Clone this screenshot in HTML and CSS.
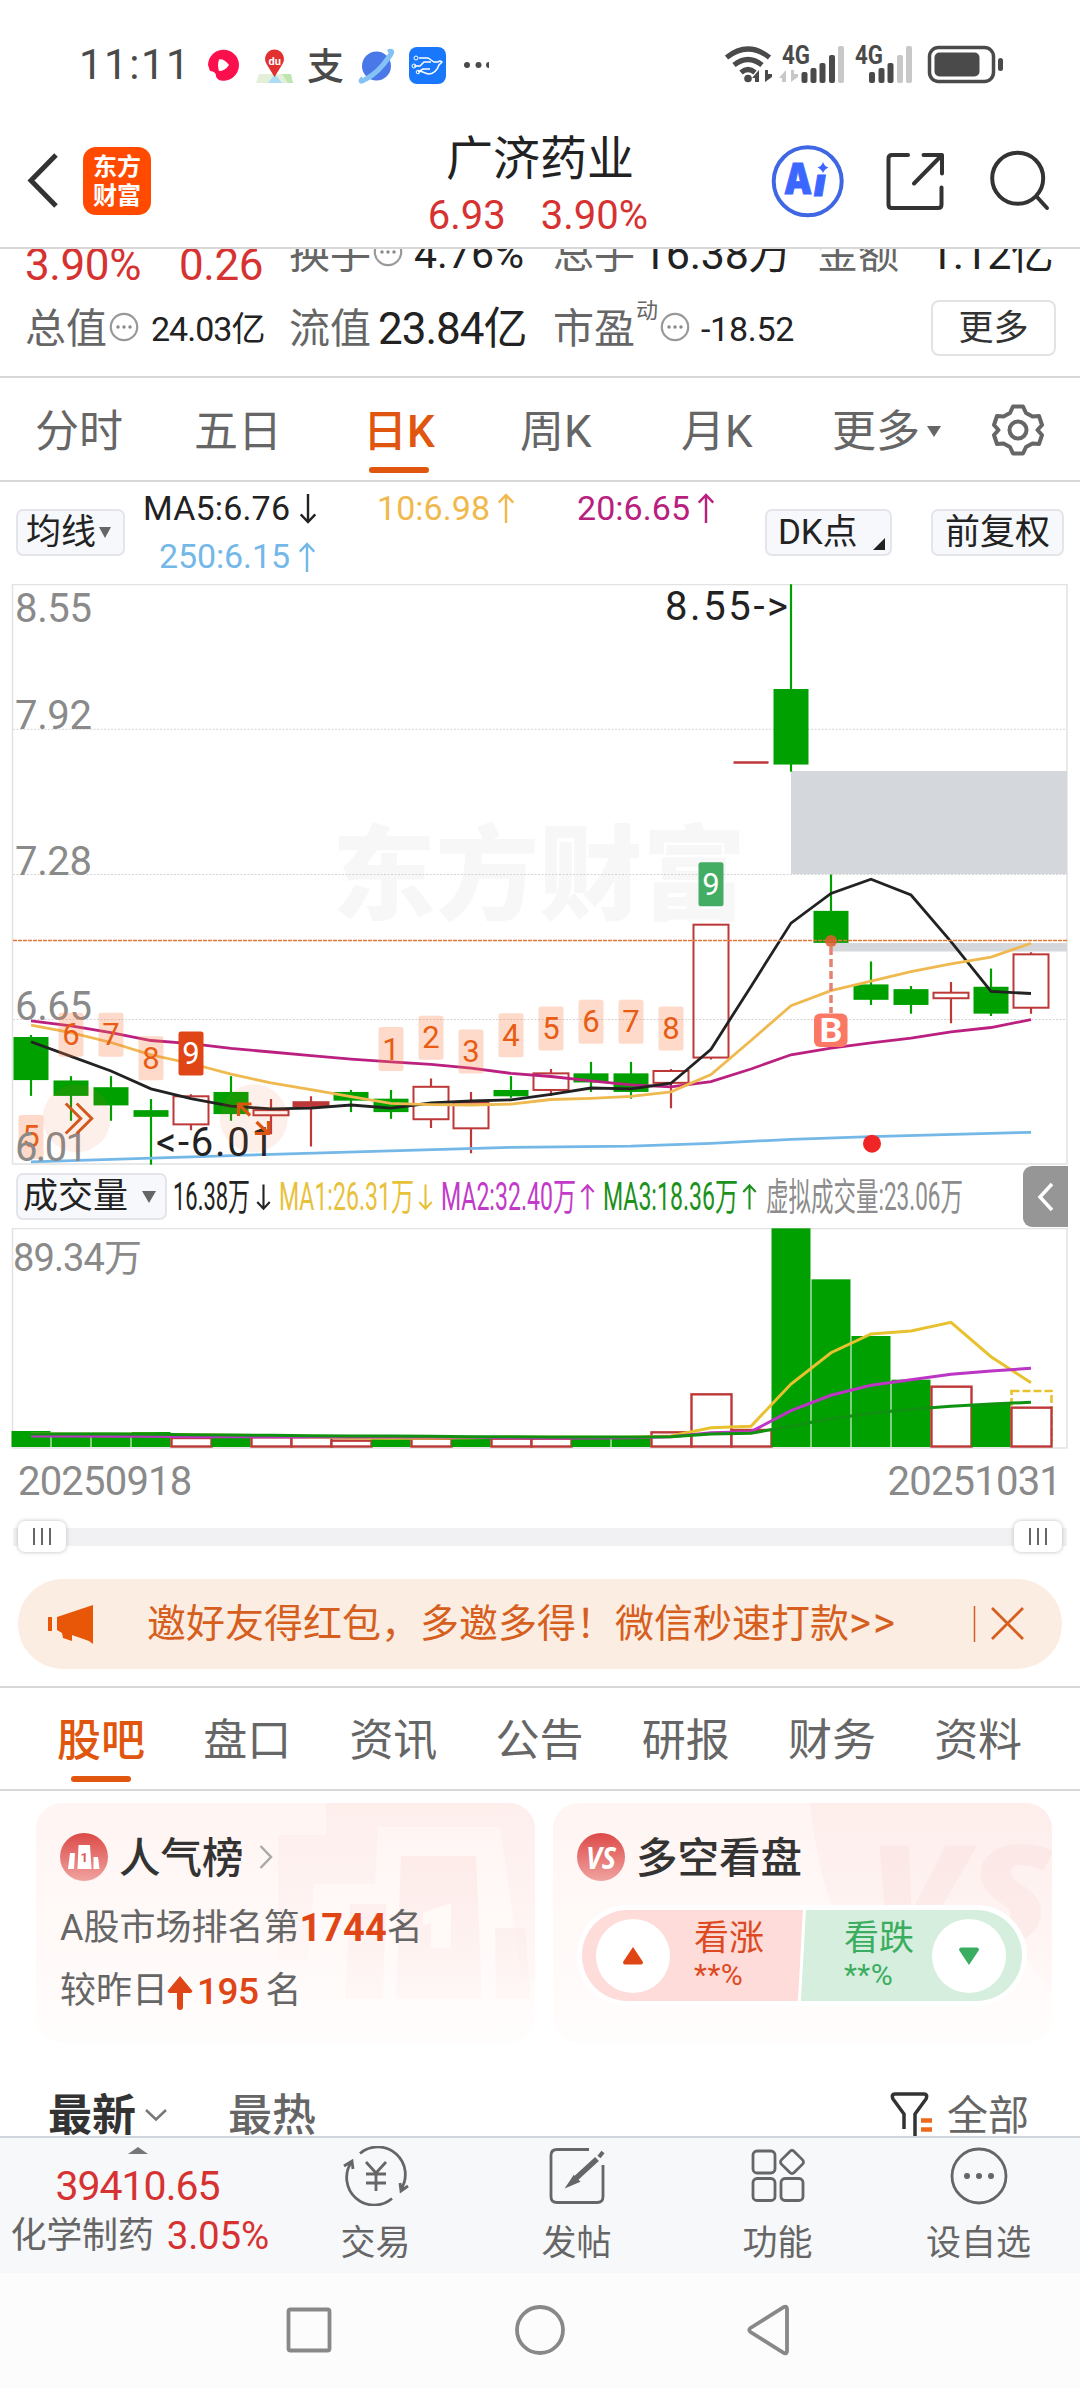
FILE: index.html
```html
<!DOCTYPE html>
<html lang="zh-CN">
<head>
<meta charset="utf-8">
<title>广济药业</title>
<link rel="stylesheet" href="styles.css">
</head>
<body>
<svg class="defs" width="0" height="0">
  <symbol id="info" viewBox="0 0 30 30"><circle cx="15" cy="15" r="13.2" fill="none" stroke="#999" stroke-width="2.2"/><circle cx="9" cy="15" r="1.7" fill="#888"/><circle cx="15" cy="15" r="1.7" fill="#888"/><circle cx="21" cy="15" r="1.7" fill="#888"/></symbol>
  <symbol id="up" viewBox="0 0 18 32"><path d="M9 31V2M1.5 10L9 2l7.500 8" fill="none" stroke="currentColor" stroke-width="2.500"/></symbol>
  <symbol id="down" viewBox="0 0 18 32"><path d="M9 1v29M1.500 22L9 30l7.500-8" fill="none" stroke="currentColor" stroke-width="2.500"/></symbol>
</svg>

<div class="status">
  <span class="clock">11:11</span>
  <svg class="status-left" width="290" height="60" viewBox="200 35 290 60">
    <path d="M208 65a15.500 15.500 0 1 1 18 15.500c-5 1-8 0-10-4 0-4-2-5-6-5.500z" fill="#fb0f4d"/>
    <path d="M219 59.500q5-1 10 5.500-4 6-10 6-2-6 0-11.500z" fill="#fff"/>
    <path d="M259 74h31l3 9h-37z" fill="#e3efd9"/><path d="M268 83l7-9 7 9z" fill="#aadcf5"/><path d="M282 74h9l2 9h-5z" fill="#bfe6b0"/>
    <path d="M274.500 77l-8-13a9.500 9.500 0 1 1 16 0z" fill="#e23030"/>
    <text x="268.500" y="65" class="du">du</text>
    <text x="307" y="80" class="zhi">支</text>
    <circle cx="376.500" cy="66" r="14.500" fill="#4a78e8"/><path d="M363 78q-5 6 3 1 12-6 23-22 6-8-1-5" fill="none" stroke="#84c2f6" stroke-width="5"/>
    <rect x="409" y="47" width="37" height="37" rx="8" fill="#1877fb"/>
    <path d="M419 58h9l6 4h4q2-2 4 0l-3 3q-3 9-11 9l-8-3M414 66h6l4-4h7M418 72l5-3h7" fill="none" stroke="#fff" stroke-width="1.500"/><circle cx="416" cy="58" r="2" fill="none" stroke="#fff"/><circle cx="414" cy="66" r="2" fill="none" stroke="#fff"/><circle cx="418" cy="72" r="1.800" fill="none" stroke="#fff"/>
    <circle cx="467" cy="65" r="3"/><circle cx="478.500" cy="65" r="3"/><path d="M489 62v6a3 3 0 0 1 0-6z"/>
  </svg>
  <svg class="status-right" width="290" height="50" viewBox="720 40 290 50">
    <g fill="none" stroke="#4a4a4a" stroke-width="5.200"><path d="M726.500 57.500q21.500-17 43 0M734 65q14-11 28 0M741 72.500q7-6 14 0"/></g>
    <circle cx="748" cy="78.500" r="3.800"/>
    <path d="M759 70v12h-4v-4h-3zM765 70v12l7-5v-3h-4v-4z"/>
    <path d="M786 70v12h-4v-4h-3zM791 70v12l7-5v-3h-4v-4z" fill="#c8c8c8"/>
    <text x="782" y="64" class="net" textLength="28" lengthAdjust="spacingAndGlyphs">4G</text>
    <text x="855" y="64" class="net" textLength="28" lengthAdjust="spacingAndGlyphs">4G</text>
    <rect x="801.500" y="72" width="6" height="11" rx="2"/><rect x="810.500" y="68" width="6" height="15" rx="2"/><rect x="819.500" y="63" width="6" height="20" rx="2"/><rect x="829" y="55" width="6" height="28" rx="2"/><rect x="838" y="46" width="6" height="37" rx="2" fill="#c8c8c8"/>
    <rect x="869" y="72" width="6" height="11" rx="2"/><rect x="878.500" y="68" width="6" height="15" rx="2"/><rect x="887.500" y="63" width="6" height="20" rx="2"/><rect x="897" y="55" width="6" height="28" rx="2" fill="#c8c8c8"/><rect x="906" y="46" width="6" height="37" rx="2" fill="#c8c8c8"/>
    <rect x="929.500" y="47.500" width="64" height="34" rx="9" fill="none" stroke="#4a4a4a" stroke-width="3.500"/><rect x="934.500" y="52.500" width="45" height="24" rx="5"/><rect x="998" y="58" width="5" height="13" rx="2.500"/>
  </svg>
</div>

<header class="header">
  <div class="header-left">
    <svg width="36" height="60" viewBox="25 152 36 60"><path d="M56 156L31 181.500 56 207" fill="none" stroke="#333" stroke-width="5"/></svg>
    <div class="logo"><span>东方</span><span>财富</span></div>
  </div>
  <div class="title"><h1>广济药业</h1><div class="title-quote"><span>6.93</span><span>3.90%</span></div></div>
  <svg class="header-icons" width="290" height="80" viewBox="770 141 290 80" fill="none" stroke="#333" stroke-width="4" stroke-linecap="round">
    <circle cx="808.700" cy="181.300" r="34" stroke="#4067e3"/>
    <text x="785" y="194" class="ai" textLength="28" lengthAdjust="spacingAndGlyphs">A</text>
    <text x="815" y="195.500" class="ai small">ı</text>
    <path d="M824 162q1.500 4.500 5.500 5.500-4 1.500-5.500 5.500-1.500-4-5.500-5.500 4-1 5.500-5.500z" fill="#3b66ff" stroke="none"/>
    <path d="M909 155h-16q-3.500 0-3.500 3.500v46q0 3.500 3.500 3.500h46q3.500 0 3.500-3.500v-17M924.500 155h18.500v18.500M942 156l-27 27.500" stroke-linejoin="round"/>
    <circle cx="1018.700" cy="178.300" r="25.500"/><path d="M1038 197l10 11"/>
  </svg>
</header>

<section class="quote">
  <div class="quote-row first">
    <div class="chg"><span>3.90%</span><span>0.26</span></div>
    <div><b>换手</b><svg class="info"><use href="#info"/></svg><em class="v1">4.76%</em></div>
    <div class="c3"><b>总手</b><em class="v2">16.38万</em></div>
    <div class="c4"><b>金额</b><em>1.12亿</em></div>
  </div>
  <div class="quote-row">
    <div><b>总值</b><svg class="info"><use href="#info"/></svg><em class="small">24.03亿</em></div>
    <div><b>流值</b><em class="big">23.84亿</em></div>
    <div class="c3"><b>市盈</b><sup>动</sup><svg class="info"><use href="#info"/></svg><em class="small">-18.52</em></div>
    <div class="c4"><button class="more">更多</button></div>
  </div>
</section>

<nav class="period">
  <span>分时</span><span>五日</span><span class="on">日K</span><span>周K</span><span>月K</span><span>更多<i class="caret"></i></span>
  <svg width="54" height="54" viewBox="-27 -27 54 54" fill="none" stroke="#666" stroke-width="4" stroke-linejoin="round"><path d="M-5-23.500H5L8-17 14.500-13.500 21-14 24-5 19.500 0 24 5 21 14 14.500 13.500 8 17 5 23.500H-5L-8 17-14.500 13.500-21 14-24 5-19.500 0-24-5-21-14-14.500-13.500-8-17z"/><circle r="8.500"/></svg>
</nav>

<div class="ma-bar">
  <button class="chip">均线<i class="caret"></i></button>
  <svg class="ma-text" width="600" height="102" viewBox="135 482 600 102">
    <g fill="#222" color="#222"><text x="143" y="519.500" textLength="147">MA5:6.76</text><use href="#down" x="299" y="493" width="18" height="31"/></g>
    <g fill="#f0b94d" color="#f0b94d"><text x="377" y="519.500" textLength="113">10:6.98</text><use href="#up" x="497" y="493" width="18" height="31"/></g>
    <g fill="#b8207e" color="#b8207e"><text x="577" y="519.500" textLength="113">20:6.65</text><use href="#up" x="697" y="493" width="18" height="31"/></g>
    <g fill="#74b8e8" color="#74b8e8"><text x="159" y="568" textLength="131">250:6.15</text><use href="#up" x="298" y="542" width="18" height="31"/></g>
  </svg>
  <button class="chip dk">DK点<i class="corner"></i></button>
  <button class="chip">前复权</button>
</div>

<svg class="kline" id="kline" width="1080" height="582" viewBox="0 584 1080 582">
  <text x="332" y="912" class="watermark" textLength="414" lengthAdjust="spacingAndGlyphs">东方财富</text>
  <path d="M13 729.300H1067M13 874.500H1067M13 1019.500H1067" stroke="#d4d4d4" stroke-dasharray="2 1.500"/>
  <rect x="12.500" y="584.500" width="1054.500" height="579.500" fill="none" stroke="#e2e2e2" stroke-width="1.500"/>
  <rect x="791" y="771" width="276" height="103" fill="#d4d7dc"/><rect x="831" y="943" width="236" height="8.500" fill="#d4d7dc"/>
  <g id="candles"></g>
  <g id="averages" fill="none" stroke-width="2.800"></g>
  <path d="M13 940.500H1067" stroke="#e0783a" stroke-width="1.400" stroke-dasharray="4 1"/>
  <g class="axis"><text x="15" y="621.500" textLength="77">8.55</text><text x="15" y="729" textLength="77">7.92</text><text x="15" y="874.500" textLength="77">7.28</text><text x="15" y="1019.500" textLength="77">6.65</text></g>
  <g id="counts"></g>
  <g class="axis"><text x="15" y="1160.500" textLength="73">6.01</text></g>
  <g class="mark"><text x="665" y="619.500" textLength="123">8.55-&gt;</text><text x="156" y="1155.500" textLength="118">&lt;-6.01</text></g>
  <circle cx="76.700" cy="1118.300" r="34" fill="#f06a30" fill-opacity=".1"/><circle cx="253.700" cy="1118.300" r="34" fill="#f06a30" fill-opacity=".1"/>
  <path d="M65.700 1103.500l15 15-15 15M76.700 1103.500l15 15-15 15" fill="none" stroke="#d2581c" stroke-width="3"/>
  <path d="M238.500 1116v-12h13M239 1104.500l11 11M268.500 1121v12.500H255M268 1133l-11.500-11" fill="none" stroke="#dc5510" stroke-width="3.200"/>
  <path d="M831 947v66" stroke="#e58272" stroke-width="3.500" stroke-dasharray="8 4"/><circle cx="831" cy="941" r="6" fill="#e45a30" fill-opacity=".85"/>
  <rect x="814" y="1013.500" width="33.500" height="33.500" rx="6" fill="#fa7864"/><text x="819.500" y="1041.500" class="buy" textLength="23" lengthAdjust="spacingAndGlyphs">B</text>
  <circle cx="872" cy="1143.700" r="9" fill="#f02626"/>
</svg>

<div class="vol-bar">
  <button class="chip">成交量<i class="caret"></i></button>
  <svg width="800" height="62" viewBox="173 1166 800 62">
    <g fill="#222" color="#222"><text x="173" y="1210" textLength="77" lengthAdjust="spacingAndGlyphs">16.38万</text><use href="#down" x="256" y="1180" width="15" height="34"/></g>
    <g fill="#e8c13a" color="#e8c13a"><text x="279" y="1210" textLength="135" lengthAdjust="spacingAndGlyphs">MA1:26.31万</text><use href="#down" x="418" y="1180" width="15" height="34"/></g>
    <g fill="#c23ac8" color="#c23ac8"><text x="441" y="1210" textLength="135" lengthAdjust="spacingAndGlyphs">MA2:32.40万</text><use href="#up" x="580" y="1180" width="15" height="34"/></g>
    <g fill="#1c911c" color="#1c911c"><text x="603" y="1210" textLength="135" lengthAdjust="spacingAndGlyphs">MA3:18.36万</text><use href="#up" x="742" y="1180" width="15" height="34"/></g>
    <text x="766" y="1210" fill="#8c8c8c" textLength="197" lengthAdjust="spacingAndGlyphs">虚拟成交量:23.06万</text>
  </svg>
  <div class="fold"><svg width="20" height="30" viewBox="0 0 20 30"><path d="M16 2L4 15l12 13" fill="none" stroke="#fff" stroke-width="3.500"/></svg></div>
</div>

<svg class="volume" width="1080" height="222" viewBox="0 1228 1080 222">
  <rect x="12.500" y="1228.500" width="1054.500" height="219.500" fill="none" stroke="#e2e2e2" stroke-width="1.500"/>
  <g id="volbars"></g>
  <g id="volavg" fill="none" stroke-width="3"></g>
  <g class="axis"><text x="13" y="1270.500" class="vmax" textLength="129">89.34万</text></g>
</svg>
<div class="dates"><span>20250918</span><span>20251031</span></div>
<div class="slider"><i></i><i></i></div>

<div class="banner">
  <svg width="50" height="44" viewBox="45 1601 50 44" fill="#e85708"><rect x="48" y="1616" width="4" height="14"/><path d="M93 1604v39l-4-3-17-6v6l-9-3-1-5-5-3v-13z"/></svg>
  <span>邀好友得红包，多邀多得！微信秒速打款<em>&gt;&gt;</em></span>
  <svg width="54" height="40" viewBox="973 1604 54 40" fill="none" stroke="#d65f20"><path d="M974.500 1606v36" stroke-width="1.500"/><path d="M992 1608l31 31M1023 1608l-31 31" stroke-width="2.800"/></svg>
</div>

<nav class="sections"><span class="on">股吧</span><span>盘口</span><span>资讯</span><span>公告</span><span>研报</span><span>财务</span><span>资料</span></nav>

<section class="cards">
  <article class="card rank">
    <svg class="deco" width="499" height="240" viewBox="36 1803 499 240"><defs><linearGradient id="fade" x1="0" y1="1803" x2="0" y2="2010" gradientUnits="userSpaceOnUse"><stop offset="0" stop-color="#fce8e6"/><stop offset="1" stop-color="#fce8e6" stop-opacity=".15"/></linearGradient></defs>
      <path d="M326 1803H535V1980H522L500 1827H378L375 1884H314L308 1960H278V1835H326z" fill="url(#fade)" opacity=".5"/>
      <path d="M350 1904h36l-3 95h-38zM401 1856h75l6 143h-86zM495 1928h30l6 71h-35z" fill="url(#fade)"/><path d="M423 1913l28-10v45h-20v-25l-8 2z" fill="#fff9f7"/></svg>
    <div class="card-title"><svg width="48" height="48" viewBox="-24 -24 48 48"><defs><linearGradient id="badge" x1="0" y1="0" x2="0" y2="1"><stop offset="0" stop-color="#dc4a48"/><stop offset="1" stop-color="#f0a3a0"/></linearGradient></defs><circle r="24" fill="url(#badge)"/><path d="M-14-4h5l-1 16h-6zM-5.500-12h11.500l1.500 24h-14zM9.500 0h4.500l1.500 12h-6z" fill="#fff"/><text x="-3.500" y="5" class="one">1</text></svg><h2>人气榜</h2><svg width="14" height="26" viewBox="0 0 14 26"><path d="M1.500 2L12 13 1.500 24" fill="none" stroke="#aaa" stroke-width="2.500"/></svg></div>
    <p class="l1">A股市场排名第<strong>1744</strong>名</p>
    <p class="l2">较昨日<svg width="26" height="34" viewBox="0 0 26 34"><path d="M13 0l12.500 15-1.500 2H16v14q0 3-3 3t-3-3V17H2L.5 15z" fill="#e04516"/></svg><strong>195</strong><span>名</span></p>
  </article>
  <article class="card versus">
    <svg class="deco" width="499" height="240" viewBox="553 1803 499 240"><path d="M810 1803h242v190l-30-40-188-40q-18-50-24-110z" fill="url(#fade)" opacity=".55"/><text x="868" y="1942" class="deco-vs" textLength="184" lengthAdjust="spacingAndGlyphs">VS</text></svg>
    <div class="card-title"><svg width="48" height="48" viewBox="-24 -24 48 48"><circle r="24" fill="url(#badge)"/><text x="-15" y="11.500" class="vs" textLength="30" lengthAdjust="spacingAndGlyphs">VS</text></svg><h2>多空看盘</h2></div>
    <div class="pill">
      <div class="side bull"><i><svg width="24" height="20" viewBox="0 0 24 20"><path d="M12 1l10 15q0 2.500-2 2.500H4q-2 0-2-2.500z" fill="#e04516"/></svg></i><span>看涨<small>**%</small></span></div>
      <div class="side bear"><span>看跌<small>**%</small></span><i><svg width="24" height="20" viewBox="0 0 24 20"><path d="M12 19l10-15q0-2.500-2-2.500H4q-2 0-2 2.500z" fill="#3aad60"/></svg></i></div>
    </div>
  </article>
</section>

<div class="sort">
  <b>最新</b><svg width="24" height="14" viewBox="0 0 24 14"><path d="M2 2l10 9.500L22 2" fill="none" stroke="#777" stroke-width="2.500"/></svg><b class="hot">最热</b>
  <svg class="filter" width="44" height="44" viewBox="890 2092 44 44"><path d="M905 2129v-15l-11-15q-2-5 2-5h29q4 0 2 5l-11 15v23" fill="none" stroke="#333" stroke-width="3.500"/><path d="M922 2120.500h11M922 2129.500h11" stroke="#ec6a1c" stroke-width="4.500"/></svg><span>全部</span>
</div>

<footer class="toolbar">
  <div class="index"><i class="tri"></i><span class="num">39410.65</span><span class="sector">化学制药<em>3.05%</em></span></div>
  <div class="tool"><svg width="66" height="60" viewBox="-33 -30 66 60" fill="none" stroke="#666" stroke-width="2.800"><path d="M-16-22.500A27.500 27.500 0 0 1 24.500 14M16 22.500A27.500 27.500 0 0 1-24.500-14M-32-10l8-5 1 8M32 10l-7 5-1-8"/><path d="M-10-14L0-3 10-14M0-3v18M-10-2H10M-10 7H10"/></svg><span>交易</span></div>
  <div class="tool"><svg width="66" height="60" viewBox="-33 -30 66 60" fill="none" stroke="#666" stroke-width="2.800"><path d="M12-26.500H-20q-6 0-6 6v41q0 6 6 6H20q6 0 6-6V-11"/><path d="M20-17L-4 5" stroke-width="5.500"/><path d="M-3 2l-4 6 7-3zM22-19l4-5" stroke-width="4"/></svg><span>发帖</span></div>
  <div class="tool"><svg width="66" height="60" viewBox="-33 -30 66 60" fill="none" stroke="#666" stroke-width="2.800"><rect x="-25" y="-25" width="22" height="22" rx="4"/><rect x="-25" y="2.500" width="22" height="22" rx="4"/><rect x="3" y="2.500" width="22" height="22" rx="4"/><rect x="5" y="-23" width="18" height="18" rx="3" transform="rotate(45 14 -14)"/></svg><span>功能</span></div>
  <div class="tool"><svg width="66" height="60" viewBox="-33 -30 66 60" fill="none" stroke="#666" stroke-width="2.800"><circle r="27"/><g fill="#666" stroke="none"><circle cx="-12" r="3"/><circle r="3"/><circle cx="12" r="3"/></g></svg><span>设自选</span></div>
</footer>

<nav class="system" aria-label="系统导航">
  <svg width="56" height="56" viewBox="-28 -28 56 56"><rect x="-20.500" y="-20.500" width="41" height="41" rx="2"/></svg>
  <svg width="56" height="56" viewBox="-28 -28 56 56"><circle r="23"/></svg>
  <svg width="56" height="56" viewBox="-28 -28 56 56"><path d="M-20.500-2L13-23q3-1.500 3 2v42q0 3.500-3 2L-20.500 2q-2.500-2 0-4z"/></svg>
</nav>
<script src="chart.js"></script>
</body>
</html>
```
FILE: styles.css
```css
* { box-sizing: border-box; }
body { margin: 0; width: 1080px; height: 2388px; overflow: hidden; background: #fff; color: #333; font-family: Roboto, "Noto Sans CJK SC", sans-serif; line-height: 1; }
h1, h2, p { margin: 0; font-weight: 400; }
i, em { font-style: normal; }
svg { display: block; flex: none; }
.defs { display: none; }
button { font: inherit; color: inherit; padding: 0; margin: 0; background: none; border: 0; }
.caret { width: 0; height: 0; border: 6.500px solid transparent; border-top: 11px solid #666; border-bottom: 0; }

.status { height: 95px; display: flex; align-items: flex-start; color: #4a4a4a; }
.clock { margin: 44px 0 0 79px; width: 121px; font-size: 42px; letter-spacing: 1.500px; white-space: nowrap; }
.status-left { margin-top: 35px; fill: #4a4a4a; }
.status-right { margin: 40px 0 0 230px; fill: #4a4a4a; }
.du { font: 700 11px Roboto; fill: #fff; }
.zhi { font: 500 37px "Noto Sans CJK SC"; }
.net { font: 700 25px Roboto; }

.header { height: 154px; border-bottom: 2px solid #d8d8d8; display: grid; grid-template-columns: 395px 290px 1fr; }
.header-left { display: flex; align-items: center; padding: 20px 0 0 25px; }
.logo { margin-left: 22px; width: 68px; height: 68px; border-radius: 13px; background: #ff4a00; color: #fff; font-size: 24px; font-weight: 700; display: flex; flex-direction: column; align-items: center; justify-content: center; gap: 5px; }
.title { padding-top: 40px; text-align: center; }
.title h1 { font-size: 47px; height: 47px; color: #222; }
.title-quote { margin: 14px 0 0 -4px; font-size: 40px; color: #d63232; display: flex; justify-content: center; gap: 35px; }
.header-icons { margin: 46px 0 0 84px; }
.ai { font: 900 43px Inter; fill: #3b66ff; stroke: #3b66ff; stroke-width: 1; }
.ai.small { font-style: italic; font-size: 39px; }

.quote { height: 129px; border-bottom: 2px solid #d8d8d8; overflow: hidden; }
.quote-row { height: 76px; display: grid; grid-template-columns: 264px 264px 264px 1fr; padding-left: 25px; align-items: center; }
.quote-row.first { margin-top: -34px; position: relative; top: 1px; height: 75px; }
.quote-row > div { display: flex; align-items: center; white-space: nowrap; }
.quote-row b { font-weight: 400; font-size: 41px; color: #666; width: 83px; padding-top: 2px; }
.quote-row em { font-size: 40px; color: #222; padding-top: 2px; }
.quote-row .info { width: 30px; height: 30px; margin: -3px 0 0 1px; }
.quote-row .v1 { margin-left: 11px; font-size: 41px; }
.quote-row .v2 { margin-left: 6px; font-size: 43px; letter-spacing: -.3px; }
.quote-row.first .c4 em { margin-left: 29px; font-size: 43px; letter-spacing: -.5px; }
.quote-row em.small { font-size: 34px; margin-left: 12px; letter-spacing: -1px; }
.quote-row em.big { font-size: 44px; margin-left: 6px; letter-spacing: -1px; }
.quote-row sup { font-size: 22px; width: 23px; align-self: flex-start; margin-top: -7px; color: #666; line-height: 22px; }
.quote-row .c3 .small { letter-spacing: -.3px; margin-left: 11px; }
.quote-row .chg { padding-top: 22px; font-size: 44px; color: #d63232; gap: 38px; letter-spacing: -.4px; }
.more { margin-left: 114px; width: 125px; height: 56px; border: 2px solid #e3e3e6; border-radius: 8px; font-size: 35px; }

.period { height: 104px; border-bottom: 2px solid #d8d8d8; padding-left: 35px; display: grid; grid-template-columns: 159px 169px 157px 161px 151px 159px 1fr; align-items: center; font-size: 44px; color: #666; }
.period span { display: flex; align-items: center; height: 104px; padding-top: 3px; position: relative; }
.period .caret { margin-left: 7px; border-width: 11px 7px 0; }
.period .on, .sections .on { color: #e0560e; font-weight: 500; }
.period .on::after { content: ""; position: absolute; left: 6px; top: 89px; width: 60px; height: 6px; border-radius: 3px; background: #e0560e; }

.chip { height: 47px; border: 2px solid #e3e5ea; border-radius: 7px; background: #f7f8fb; font-size: 35px; color: #222; display: flex; align-items: center; white-space: nowrap; position: relative; }
.ma-bar { height: 102px; display: flex; padding: 27px 16px 0; }
.ma-bar .chip { width: 109px; padding-left: 8px; }
.ma-bar .chip .caret { margin-left: 3px; }
.ma-text { margin: -27px 30px 0 10px; font-size: 34px; }
.ma-bar .dk { width: 127px; padding-left: 11px; letter-spacing: -.2px; }
.ma-bar .dk + .chip { width: 133px; margin-left: 39px; padding-left: 12px; }
.corner { position: absolute; right: 5px; bottom: 4px; border-left: 12px solid transparent; border-bottom: 12px solid #222; }

.watermark { font: 900 103px "Noto Sans CJK SC"; fill: #f7f7f7; }
.axis text { font-size: 40px; fill: #8a8a8a; }
.axis text.vmax { font-size: 38px; }
.mark text { font-size: 40px; fill: #222; }
.count { font-size: 31px; text-anchor: middle; }
.buy { font: 700 33px Roboto; fill: #fff; }

.vol-bar { height: 62px; display: flex; }
.vol-bar .chip { margin: 7px 6px 0 16px; width: 151px; padding-left: 5px; }
.vol-bar .chip .caret { margin-left: 14px; border-width: 12px 7px 0; }
.vol-bar text { font-size: 38px; }
.fold { margin-left: auto; margin-right: 12px; width: 45px; height: 61px; border-radius: 9px 0 0 9px; background: #969696; display: flex; align-items: center; justify-content: center; }
.dates { height: 72px; padding: 12px 19px 0 18px; display: flex; justify-content: space-between; font-size: 40px; letter-spacing: -.8px; color: #8a8a8a; }
.slider { height: 57px; margin: 6px 13px 0; display: flex; justify-content: space-between; align-items: flex-start; padding: 0 5px; background: linear-gradient(#f1f1f3, #f1f1f3) 0 0 / 100% 18px no-repeat; }
.slider i { margin-top: -7px; width: 48px; height: 31px; border-radius: 7px; box-shadow: 0 0 4px #bbb; background: linear-gradient(90deg, #666 2px, transparent 2px 8px, #666 8px 10px, transparent 10px 16px, #666 16px) center / 18px 17px no-repeat #fff; }

.banner { margin: -6px 18px 17px; height: 90px; border-radius: 45px; background: #fcede3; color: #d65f20; display: flex; align-items: center; padding-left: 27px; font-size: 39px; }
.banner span { margin-left: 52px; width: 826px; white-space: nowrap; margin-top: -2px; }
.banner em { font-size: 42px; letter-spacing: 2px; }

.sections { height: 105px; border-top: 2px solid #d8d8d8; border-bottom: 2px solid #d8d8d8; display: grid; grid-template-columns: repeat(7, 146.200px); padding-left: 57px; font-size: 44px; color: #666; }
.sections span { padding-top: 31px; position: relative; }
.sections .on::after { content: ""; position: absolute; left: 14px; top: 88px; width: 60px; height: 6px; border-radius: 3px; background: #e0560e; }

.cards { padding: 12px 28px 0 36px; height: 287px; display: grid; grid-template-columns: 499px 499px; gap: 18px; }
.card { height: 240px; border-radius: 26px; background: linear-gradient(#fff5f3, #fffdfc); position: relative; overflow: hidden; padding: 30px 24px 0; }
.deco { position: absolute; left: 0; top: 0; }
.deco-vs { font: italic 800 135px "Open Sans"; fill: #f9dedb; fill-opacity: .4; }
.card-title { display: flex; align-items: center; height: 48px; position: relative; }
.card-title h2 { font-size: 41.500px; font-weight: 500; margin: 3px 15px 0 11px; }
.one { font: 700 13px Roboto; fill: #dc5a57; }
.vs { font: italic 700 30px "Open Sans"; fill: #fff; }
.card p { position: relative; font-size: 36px; color: #666; display: flex; align-items: center; height: 36px; white-space: pre; }
.card strong { color: #e04516; font-size: 38px; font-weight: 700; }
.l1 { margin-top: 29px; }
.l2 { margin-top: 27px; }
.l2 svg { margin: 4px 4px 0 -1px; }
.l2 strong { font-weight: 500; font-size: 37px; letter-spacing: -.5px; }
.l2 span { margin-left: 7px; }
.pill { position: absolute; left: 24px; top: 102px; width: 450px; height: 101px; border-radius: 51px; border: 5px solid #fff; display: flex; justify-content: space-between; overflow: hidden; background: #fff; }
.side { display: flex; align-items: center; font-size: 35px; width: 222px; }
.side i { width: 74px; height: 74px; border-radius: 50%; background: #fff; display: flex; align-items: center; justify-content: center; }
.side span { margin-top: -6px; }
.side small { display: block; font-size: 30px; margin-top: 6px; height: 22px; line-height: 26px; letter-spacing: .5px; }
.bull { background: #fddcda; color: #dd4a22; padding-left: 14px; gap: 24px; clip-path: polygon(0 0, 100% 0, calc(100% - 5px) 100%, 0 100%); }
.bear { background: #d6eedd; color: #3aad60; padding-left: 43px; gap: 18px; clip-path: polygon(5px 0, 100% 0, 100% 100%, 0 100%); margin-left: -2px; }

.sort { height: 58px; padding: 12px 48px 0; display: flex; align-items: flex-start; overflow: hidden; white-space: nowrap; }
.sort b { font-size: 44px; font-weight: 700; width: 88px; margin-top: 4px; }
.sort > svg { margin: 18px 0 0 8px; }
.sort .hot { color: #666; font-weight: 500; margin-left: 60px; }
.sort .filter { margin: 2px 0 0 auto; }
.sort span { font-size: 41px; color: #666; margin: 6px 3px 0 14px; }

.toolbar { height: 137px; background: #f7f8fa; border-top: 2px solid #d0d5dc; display: grid; grid-template-columns: 275px repeat(4, 201px); color: #666; }
.index { display: flex; flex-direction: column; align-items: center; }
.tri { margin: 9px 0 0; border: 10px solid transparent; border-top: 0; border-bottom: 7px solid #777; }
.num { margin-top: 12px; font-size: 41px; letter-spacing: -1px; color: #d63232; }
.sector { margin-top: 10px; font-size: 36px; display: flex; align-items: center; width: 264px; margin-left: 10px; white-space: nowrap; letter-spacing: -.2px; }
.sector em { color: #d63232; font-size: 38.500px; margin-left: 13px; }
.tool { display: flex; flex-direction: column; align-items: center; font-size: 35px; }
.tool svg { margin: 8px 0 20px; }

.system { height: 116px; background: #fcfcfc; display: flex; justify-content: center; gap: 175px; padding: 29px 0 0; }
.system svg { fill: none; stroke: #888; stroke-width: 3.800; }
```
FILE: chart.js
```js
// Horizontal position of the n-th trading day.
const px = n => 31 + n * 40;
const GREEN = '#00a000', RED = '#bd3838';

// Price pane. Values are depths below the top of the pane's data grid.
const py = v => 570 + v / 2.529;
// [type, high, low, body top, body bottom]
const days = [
  ['g', 1176, 1330, 1181, 1290], ['g', 1280, 1393, 1291, 1330], ['g', 1280, 1393, 1308, 1354],
  ['g', 1338, 1504, 1366, 1383], ['r', 1326, 1417, 1331, 1402], ['g', 1280, 1393, 1320, 1376],
  ['r', 1338, 1427, 1366, 1379], ['r', 1331, 1458, 1346, 1356], ['g', 1315, 1371, 1320, 1342],
  ['g', 1315, 1388, 1337, 1371], ['r', 1286, 1411, 1307, 1389], ['r', 1320, 1475, 1347, 1412],
  ['g', 1280, 1335, 1315, 1331], ['r', 1262, 1330, 1273, 1315], ['g', 1244, 1320, 1273, 1296],
  ['g', 1244, 1337, 1273, 1320], ['r', 1262, 1361, 1267, 1297], ['r', 897, 1238, 897, 1233],
  ['r', 487, 487, 487, 487], ['g', 36, 510, 301, 492], ['g', 770, 943, 862, 943],
  ['g', 990, 1100, 1048, 1087], ['g', 1052, 1122, 1060, 1100], ['r', 1042, 1146, 1069, 1083],
  ['g', 1008, 1128, 1054, 1122], ['r', 967, 1122, 972, 1107]
];
let out = '';
days.forEach(([t, hi, lo, a, b], n) => {
  const x = px(n), ya = py(a), yb = py(b);
  if (t === 'g') {
    out += `<path d="M${x} ${py(hi)}V${py(lo)}" stroke="${GREEN}" stroke-width="2.2"/>`;
    out += `<rect x="${x - 17.5}" y="${ya}" width="35" height="${yb - ya}" fill="${GREEN}"/>`;
  } else if (yb - ya < 1) {
    out += `<path d="M${x - 17.5} ${ya}h35" stroke="${RED}" stroke-width="2.6"/>`;
  } else {
    const solid = yb - ya < 4.5 ? RED : 'none';
    out += `<path d="M${x} ${py(hi)}V${ya}M${x} ${yb}V${py(lo)}" stroke="${RED}" stroke-width="2.2"/>`;
    out += `<rect x="${x - 17.5}" y="${ya}" width="35" height="${yb - ya}" fill="${solid}" stroke="${RED}" stroke-width="2"/>`;
  }
});
document.getElementById('candles').innerHTML = out;

const line = (values, y, color) =>
  `<polyline stroke="${color}" points="${values.map((v, n) => px(n) + ',' + y(v).toFixed(1)).join(' ')}"/>`;
const ma250 = [1497, 1478, 1460, 1457, 1450, 1440, 1433, 1422];
const ma250x = [31, 271, 511, 631, 711, 791, 871, 1031];
document.getElementById('averages').innerHTML =
  `<polyline stroke="#74b8e8" points="${ma250.map((v, n) => ma250x[n] + ',' + py(v).toFixed(1)).join(' ')}"/>` +
  line([1140, 1153, 1170, 1190, 1198, 1210, 1219, 1228, 1237, 1244, 1250, 1260, 1273, 1281, 1292, 1302, 1307, 1294, 1262, 1226, 1209, 1196, 1184, 1168, 1157, 1137], py, '#bb2080') +
  line([1193, 1230, 1267, 1312, 1337, 1356, 1363, 1361, 1353, 1361, 1348, 1343, 1340, 1326, 1310, 1312, 1298, 1212, 1053, 893, 818, 782, 822, 940, 1066, 1071], py, '#222') +
  line([1151, 1170, 1195, 1226, 1248, 1275, 1297, 1314, 1332, 1349, 1352, 1353, 1351, 1339, 1336, 1331, 1320, 1276, 1190, 1102, 1064, 1040, 1016, 996, 979, 944], py, '#efb950');

// Sequence counters: [day, digit, top, style]
const counts = [
  [0, 5, 1378], [1, 6, 1120], [2, 7, 1120], [3, 8, 1179], [4, 9, 1167, '#e04516'],
  [9, 1, 1156], [10, 2, 1127], [11, 3, 1162], [12, 4, 1121], [13, 5, 1104],
  [14, 6, 1087], [15, 7, 1087], [16, 8, 1104], [17, 9, 739, '#42ad63']
];
document.getElementById('counts').innerHTML = counts.map(([n, d, top, solid]) =>
  `<rect x="${px(n) - 12.5}" y="${py(top)}" width="25" height="44" rx="2.5" fill="${solid || '#f97a3c'}" fill-opacity="${solid ? 1 : .28}"/>` +
  `<text class="count" x="${px(n)}" y="${py(top) + 32.5}" fill="${solid ? '#fff' : '#e85c14'}">${d}</text>`).join('');

// Volume pane: [type, top of the bar]
const vy = v => 1150 + v / 3;
const vols = [
  ['g', 843], ['g', 848], ['g', 848], ['g', 846], ['r', 864], ['g', 858], ['r', 862], ['r', 862], ['r', 872],
  ['g', 866], ['r', 866], ['g', 864], ['r', 866], ['r', 866], ['g', 866], ['g', 864], ['r', 847], ['r', 733],
  ['r', 840], ['g', 235], ['g', 388], ['g', 558], ['g', 689], ['r', 710], ['g', 762], ['r', 773]
];
const bar = ([t, v], n) => t === 'g'
  ? `<rect x="${px(n) - 19.5}" y="${vy(v)}" width="39" height="${1447 - vy(v)}" fill="${GREEN}"/>`
  : `<rect x="${px(n) - 19.5}" y="${vy(v)}" width="40" height="${1446.5 - vy(v)}" fill="#fff" stroke="${RED}" stroke-width="2.4"/>`;
const v1 = line([852, 853, 853, 853, 855, 856, 857, 860, 864, 865, 864, 863, 862, 862, 862, 862, 858, 833, 829, 702, 608, 552, 543, 517, 620, 698], vy, '#e8c22e');
const v2 = line([858, 858, 859, 859, 860, 860, 860, 860, 861, 861, 861, 862, 863, 864, 864, 863, 860, 848, 845, 782, 736, 706, 689, 673, 663, 655], vy, '#bd35c4');
const v3 = line([852, 852, 852, 853, 854, 855, 856, 857, 858, 858, 859, 860, 860, 861, 861, 861, 860, 852, 850, 828, 806, 790, 778, 769, 762, 757], vy, '#0f920f');
document.getElementById('volbars').innerHTML =
  `<rect x="1011.5" y="${vy(723)}" width="40" height="50" fill="none" stroke="#e8c22e" stroke-width="2.6" stroke-dasharray="8 3"/>` + vols.map(bar).join('');
document.getElementById('volavg').innerHTML = v1 + v2 + v3;
```
